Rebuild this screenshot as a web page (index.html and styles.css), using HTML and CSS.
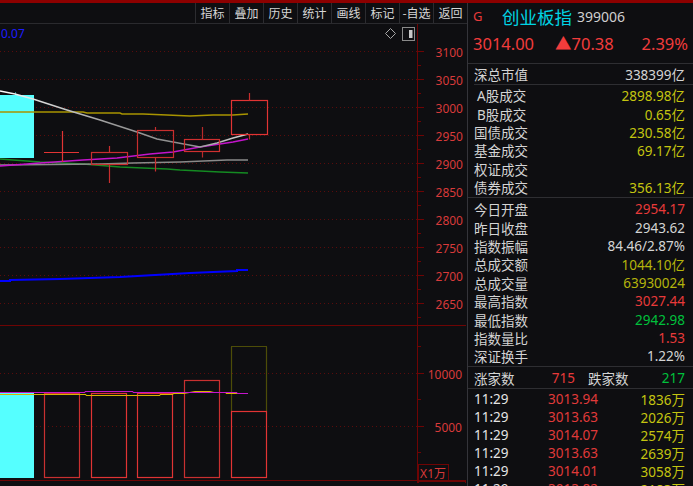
FILE: index.html
```html
<!DOCTYPE html>
<html lang="zh-CN">
<head>
    <meta charset="UTF-8">
    <title>创业板指 399006</title>
    <link rel="stylesheet" href="styles.css">
</head>
<body>
    <div class="topbar"></div>
    <div class="main">
        <div class="left">
            <div class="toolbar">
                <span class="tool">指标</span>
                <span class="tool">叠加</span>
                <span class="tool">历史</span>
                <span class="tool">统计</span>
                <span class="tool">画线</span>
                <span class="tool">标记</span>
                <span class="tool">-自选</span>
                <span class="tool">返回</span>
            </div>
            <div class="chart">
                <svg class="plot" width="467" height="459" viewBox="0 24 467 459">
                    <!-- grid -->
                    <g stroke="#5a0c0c" stroke-width="1" stroke-dasharray="1 3">
                        <line x1="0" y1="51.5" x2="417" y2="51.5"/>
                        <line x1="0" y1="79.5" x2="417" y2="79.5"/>
                        <line x1="0" y1="107.5" x2="417" y2="107.5"/>
                        <line x1="0" y1="135.5" x2="417" y2="135.5"/>
                        <line x1="0" y1="163.5" x2="417" y2="163.5"/>
                        <line x1="0" y1="191.5" x2="417" y2="191.5"/>
                        <line x1="0" y1="219.5" x2="417" y2="219.5"/>
                        <line x1="0" y1="247.5" x2="417" y2="247.5"/>
                        <line x1="0" y1="275.5" x2="417" y2="275.5"/>
                        <line x1="0" y1="303.5" x2="417" y2="303.5"/>
                        <line x1="0" y1="373.5" x2="417" y2="373.5"/>
                        <line x1="0" y1="426.5" x2="417" y2="426.5"/>
                    </g>
                    <!-- axis -->
                    <g stroke="#6e0404" stroke-width="1" fill="none">
                        <line x1="417.5" y1="24" x2="417.5" y2="483"/>
                        <line x1="0" y1="325.5" x2="466" y2="325.5"/>
                        <line x1="0" y1="480.5" x2="466" y2="480.5"/>
                        <path d="M418 51.5h6M418 65.5h3M418 79.5h6M418 93.5h3M418 107.5h6M418 121.5h3M418 135.5h6M418 149.5h3M418 163.5h6M418 177.5h3M418 191.5h6M418 205.5h3M418 219.5h6M418 233.5h3M418 247.5h6M418 261.5h3M418 275.5h6M418 289.5h3M418 303.5h6M418 317.5h3M418 346.5h3M418 373.5h6M418 399.5h3M418 426.5h6M418 452.5h3"/>
                        <rect x="418.5" y="464.5" width="30" height="16"/>
                        <rect x="418.5" y="481.5" width="47" height="8"/>
                    </g>
                    <g class="axis-text" fill="#d83a3a" text-anchor="end">
                        <text x="463" y="52">3100</text>
                        <text x="463" y="80">3050</text>
                        <text x="463" y="108">3000</text>
                        <text x="463" y="136">2950</text>
                        <text x="463" y="164">2900</text>
                        <text x="463" y="192">2850</text>
                        <text x="463" y="220">2800</text>
                        <text x="463" y="248">2750</text>
                        <text x="463" y="276">2700</text>
                        <text x="463" y="304">2650</text>
                        <text x="462" y="374">10000</text>
                        <text x="462" y="427">5000</text>
                        <text x="446" y="473">X1万</text>
                    </g>
                    <text class="ma-label" x="1" y="33" fill="#1c1cff">0.07</text>

                    <!-- chart controls -->
                    <path d="M390.5 28.5l5 5-5 5-5-5z" fill="none" stroke="#a8a8a8"/>
                    <rect x="402.5" y="27.5" width="12" height="13" fill="none" stroke="#8a8a8a"/>
                    <rect x="409" y="30" width="3.5" height="8" fill="#c8c8c8"/>

                    <!-- price candles -->
                    <rect x="0" y="95" width="34" height="63" fill="#55ffff"/>
                    <line x1="15.5" y1="92" x2="15.5" y2="95" stroke="#2e8c8c"/>

                    <defs>
                        <linearGradient id="ma5" x1="0" y1="0" x2="248" y2="0" gradientUnits="userSpaceOnUse">
                            <stop offset="0" stop-color="#ffffff"/>
                            <stop offset="0.45" stop-color="#9a9a9a"/>
                            <stop offset="0.75" stop-color="#8c8c8c"/>
                            <stop offset="1" stop-color="#d8d8d8"/>
                        </linearGradient>
                    </defs>
                    <g fill="none" stroke-width="1.4">
                        <polyline stroke="#a89400" points="0,112 83,112 87,113 120,113 122,114 143,114 167,115 190,116 213,115 233,115 248,114"/>
                        <polyline stroke="#148a22" points="0,159 13,160 40,162 83,164 120,167 143,168 167,169 180,170 200,171 220,172 248,173"/>
                        <polyline stroke="#8a8a8a" points="0,165 100,164 133,163 180,162 227,160 248,160"/>
                        <polyline stroke="#c414cc" points="0,166 40,163 83,160 117,158 150,154 173,152 200,147 233,142 248,139"/>
                        <polyline stroke="url(#ma5)" points="0,91 15,94 33,99 67,110 100,120 137,132 157,139 173,142 200,147 217,143 233,138 248,134"/>
                        <polyline stroke="#0000ff" stroke-width="2" points="0,281 10,281 10,280 60,279 120,277 190,273 213,272 237,271 237,270 248,270"/>
                    </g>

                    <g fill="none" stroke="#e23434" stroke-width="1.2">
                        <path d="M44 152.5h35M62.5 131v31"/>
                        <rect x="91.5" y="152.5" width="36" height="12" stroke="#c82e2e"/>
                        <path d="M109.5 146v6.5M109.5 164.5v18.5" stroke="#c82e2e"/>
                        <rect x="137.5" y="130.5" width="36" height="27" stroke="#c82e2e"/>
                        <path d="M155.5 127v3.5M155.5 157.5v14" stroke="#c82e2e"/>
                        <rect x="184.5" y="139.5" width="35" height="12" stroke="#d03030"/>
                        <path d="M202.5 127v12.5M202.5 151.5v6" stroke="#b82a2a"/>
                        <rect x="231.5" y="100.5" width="36" height="34"/>
                        <path d="M249.5 93v7.5M249.5 134.5v5" stroke="#c82e2e"/>
                    </g>

                    <!-- volume -->
                    <rect x="0" y="393" width="34" height="85" fill="#55ffff"/>
                    <g fill="none" stroke="#c83030" stroke-width="1.2">
                        <rect x="44.5" y="393.5" width="35" height="84"/>
                        <rect x="91.5" y="393.5" width="35" height="84" stroke="#e03434"/>
                        <rect x="137.5" y="393.5" width="35" height="84" stroke="#e03434"/>
                        <rect x="184.5" y="380.5" width="35" height="97"/>
                        <rect x="231.5" y="346.5" width="35" height="65" stroke="#8c8c00" stroke-dasharray="1 1"/>
                        <rect x="231.5" y="411.5" width="35" height="66" stroke="#e23434"/>
                    </g>
                    <g fill="none" stroke-width="1">
                        <polyline stroke="#d8b400" points="0,394.5 86,394.5 86,395.5 160,395.5 160,394.5 173,394.5 173,393.5 184,393.5 195,391.5 210,391.5 214,392.5 226,392.5 226,393.5 241,393.5"/>
                        <polyline stroke="#c414cc" points="0,392.5 85,392.5 85,391.5 133,391.5 133,392.5 237,392.5 237,393.5 248,393.5"/>
                    </g>
                </svg>
            </div>
        </div>

        <div class="panel">
            <div class="title-row">
                <span class="mark">G</span>
                <span class="name">创业板指</span>
                <span class="code">399006</span>
            </div>
            <div class="quote-row">
                <span class="price">3014.00</span>
                <span class="change">▲70.38</span>
                <span class="pct">2.39%</span>
            </div>

            <div class="section first">
                <div class="row mkt"><span>深总市值</span><span class="v">338399亿</span></div>
                <div class="sub">
                    <div class="row"><span class="ab">A股成交</span><span class="v yellow">2898.98亿</span></div>
                    <div class="row"><span class="ab">B股成交</span><span class="v yellow">0.65亿</span></div>
                    <div class="row"><span>国债成交</span><span class="v yellow">230.58亿</span></div>
                    <div class="row"><span>基金成交</span><span class="v yellow">69.17亿</span></div>
                    <div class="row"><span>权证成交</span><span class="v yellow"></span></div>
                    <div class="row"><span>债券成交</span><span class="v yellow">356.13亿</span></div>
                </div>
            </div>

            <div class="section stats">
                <div class="row"><span>今日开盘</span><span class="v red">2954.17</span></div>
                <div class="row"><span>昨日收盘</span><span class="v">2943.62</span></div>
                <div class="row"><span>指数振幅</span><span class="v">84.46/2.87%</span></div>
                <div class="row"><span>总成交额</span><span class="v olive">1044.10亿</span></div>
                <div class="row"><span>总成交量</span><span class="v olive">63930024</span></div>
                <div class="row"><span>最高指数</span><span class="v red">3027.44</span></div>
                <div class="row"><span>最低指数</span><span class="v green">2942.98</span></div>
                <div class="row"><span>指数量比</span><span class="v red">1.53</span></div>
                <div class="row"><span>深证换手</span><span class="v">1.22%</span></div>
            </div>

            <div class="section breadth">
                <span class="b-label">涨家数</span>
                <span class="b-num red">715</span>
                <span class="b-label down">跌家数</span>
                <span class="b-num last green">217</span>
            </div>

            <div class="section ticks">
                <div class="tick"><span class="t">11:29</span><span class="p">3013.94</span><span class="q">1836万</span></div>
                <div class="tick"><span class="t">11:29</span><span class="p">3013.63</span><span class="q">2026万</span></div>
                <div class="tick"><span class="t">11:29</span><span class="p">3014.07</span><span class="q">2574万</span></div>
                <div class="tick"><span class="t">11:29</span><span class="p">3013.63</span><span class="q">2639万</span></div>
                <div class="tick"><span class="t">11:29</span><span class="p">3014.01</span><span class="q">3058万</span></div>
                <div class="tick"><span class="t">11:29</span><span class="p">3013.82</span><span class="q">2183万</span></div>
            </div>
        </div>
    </div>
</body>
</html>
```

FILE: styles.css
```css
/* page */
* {
    box-sizing: border-box;
}

body {
    margin: 0;
    width: 693px;
    height: 486px;
    overflow: hidden;
    background-color: #0e0e11;
    color: #d4d4d4;
    font-family: "Noto Sans", "Noto Sans CJK SC", sans-serif;
}

.topbar {
    height: 3px;
    background-color: #8c0000;
}

.main {
    display: flex;
    height: 483px;
}

/* left: toolbar + chart */
.left {
    width: 467px;
    display: flex;
    flex-direction: column;
}

.toolbar {
    height: 21px;
    display: flex;
    justify-content: flex-end;
    border-bottom: 1px solid #2a2a2e;
}

.tool {
    width: 34px;
    border-left: 1px solid #2c2c30;
    font-family: "Noto Sans CJK SC", sans-serif;
    font-size: 12px;
    line-height: 20px;
    text-align: center;
    color: #d6d6d6;
}

.chart {
    height: 459px;
}

.plot {
    display: block;
}

.axis-text text {
    font-family: "Noto Sans", sans-serif;
    font-size: 12px;
    dominant-baseline: central;
}

.ma-label {
    font-family: "Noto Sans", sans-serif;
    font-size: 12px;
    dominant-baseline: central;
}

/* right: quote panel */
.panel {
    width: 226px;
    border-left: 1px solid #34343a;
    font-size: 13.5px;
}

.title-row {
    height: 26px;
    display: flex;
    align-items: center;
    padding-left: 5px;
}

.mark {
    color: #e83a3a;
    font-size: 13px;
    width: 29px;
}

.name {
    color: #00d4e4;
    font-family: "Noto Sans CJK SC", sans-serif;
    font-size: 17.5px;
}

.code {
    margin-left: 5px;
    color: #cfcfcf;
    font-size: 14px;
}

.quote-row {
    height: 28px;
    margin-bottom: 6px;
    display: flex;
    align-items: center;
    padding: 0 5px 0 5px;
    color: #f23c3c;
    font-size: 16.5px;
}

.price {
    width: 82px;
}

.pct {
    margin-left: auto;
}

.section {
    border-top: 1px solid #2e2e32;
}

.row {
    display: flex;
    justify-content: space-between;
    align-items: center;
    height: 18.35px;
    padding: 0 8px 0 6px;
    white-space: nowrap;
}

.row.mkt {
    height: 20px;
}

.sub {
    margin-left: 6px;
    border-top: 1px solid #2e2e32;
    padding: 1px 0 1px 0;
}

.sub .row {
    padding-left: 0;
}

.ab {
    padding-left: 3px;
}

.stats {
    padding: 2px 0 0 0;
    height: 169px;
}

.stats .row {
    height: 18.4px;
}

.breadth {
    height: 22px;
    display: flex;
    align-items: center;
    padding: 0 8px 0 6px;
}

.b-label {
    width: 41px;
}

.b-num {
    width: 60px;
    text-align: right;
}

.b-label.down {
    margin-left: 13px;
}

.b-num.last {
    flex: 1;
}

.ticks {
    padding-top: 1px;
}

.tick {
    display: flex;
    align-items: center;
    height: 18px;
    padding: 0 8px 0 6px;
    white-space: nowrap;
}

.tick .t {
    width: 74px;
    color: #e4e4e4;
}

.tick .p {
    width: 50px;
    text-align: right;
    color: #e03a3a;
}

.tick .q {
    flex: 1;
    text-align: right;
    color: #c4c410;
}

/* value colours */
.v {
    color: #d4d4d4;
}

.red {
    color: #e83a3a;
}

.green {
    color: #00c03c;
}

.yellow {
    color: #c4c410;
}

.olive {
    color: #b4b40c;
}
```
